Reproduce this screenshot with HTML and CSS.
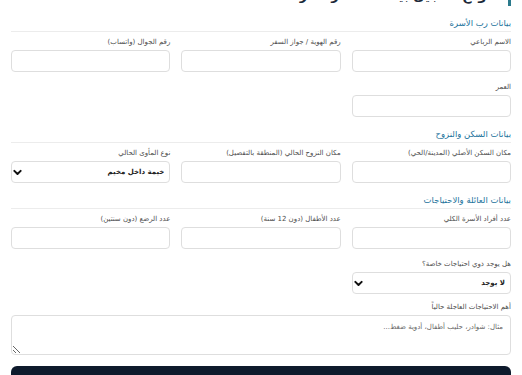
FILE: index.html
```html
<!DOCTYPE html>
<html lang="ar" dir="rtl">
<head>
    <meta charset="UTF-8">
    <meta name="viewport" content="width=device-width, initial-scale=1.0">
    <title>تسجيل بيانات الأسر</title>
    <link rel="stylesheet" href="styles.css">
</head>
<body>
    <div id="form-page">
        <h1 class="form-title">نموذج تسجيل بيانات الأسر النازحة</h1>

        <section class="form-section">
            <h2 class="section-title">بيانات رب الأسرة</h2>
            <div class="fields">
                <div class="field">
                    <label for="full-name">الاسم الرباعي</label>
                    <input type="text" id="full-name">
                </div>
                <div class="field">
                    <label for="id-number">رقم الهوية / جواز السفر</label>
                    <input type="text" id="id-number">
                </div>
                <div class="field">
                    <label for="phone">رقم الجوال (واتساب)</label>
                    <input type="text" id="phone">
                </div>
                <div class="field">
                    <label for="age">العمر</label>
                    <input type="text" id="age">
                </div>
            </div>
        </section>

        <section class="form-section">
            <h2 class="section-title">بيانات السكن والنزوح</h2>
            <div class="fields">
                <div class="field">
                    <label for="origin">مكان السكن الأصلي (المدينة/الحي)</label>
                    <input type="text" id="origin">
                </div>
                <div class="field">
                    <label for="current-place">مكان النزوح الحالي (المنطقة بالتفصيل)</label>
                    <input type="text" id="current-place">
                </div>
                <div class="field">
                    <label for="shelter">نوع المأوى الحالي</label>
                    <div class="select-box">
                        <select id="shelter">
                            <option>خيمة داخل مخيم</option>
                            <option>مدرسة إيواء</option>
                            <option>منزل أقارب</option>
                        </select>
                        <svg class="chevron" viewBox="0 0 10 10" width="9" height="9"><path d="M1.5 3.2 5 6.7 8.5 3.2" fill="none" stroke="#111" stroke-width="2.2" stroke-linecap="round" stroke-linejoin="round"/></svg>
                    </div>
                </div>
            </div>
        </section>

        <section class="form-section">
            <h2 class="section-title">بيانات العائلة والاحتياجات</h2>
            <div class="fields">
                <div class="field">
                    <label for="members">عدد أفراد الأسرة الكلي</label>
                    <input type="text" id="members">
                </div>
                <div class="field">
                    <label for="children">عدد الأطفال (دون 12 سنة)</label>
                    <input type="text" id="children">
                </div>
                <div class="field">
                    <label for="infants">عدد الرضع (دون سنتين)</label>
                    <input type="text" id="infants">
                </div>
                <div class="field">
                    <label for="special">هل يوجد ذوي احتياجات خاصة؟</label>
                    <div class="select-box">
                        <select id="special">
                            <option>لا يوجد</option>
                            <option>نعم</option>
                        </select>
                        <svg class="chevron" viewBox="0 0 10 10" width="9" height="9"><path d="M1.5 3.2 5 6.7 8.5 3.2" fill="none" stroke="#111" stroke-width="2.2" stroke-linecap="round" stroke-linejoin="round"/></svg>
                    </div>
                </div>
            </div>
            <div class="field field-wide">
                <label for="needs">أهم الاحتياجات العاجلة حالياً</label>
                <textarea id="needs" placeholder="مثال: شوادر، حليب أطفال، أدوية ضغط..."></textarea>
            </div>
        </section>

        <button class="submit-btn">حفظ وإرسال بيانات الأسرة</button>
    </div>
</body>
</html>
```

FILE: styles.css
```css
/* Genel */
body {
    margin: 0;
    background: #fff;
    font-family: "DejaVu Sans", sans-serif;
    color: #333;
    overflow: hidden;
}

#form-page {
    padding: 0 11px;
}

.form-title {
    margin: -14px 0 11px;
    padding-right: 8px;
    border-right: 3px solid #2b7a8c;
    font-size: 13px;
    line-height: 20px;
    color: #1d2a3a;
}

.form-section {
    margin-bottom: 11px;
}

.section-title {
    margin: 0 0 6px;
    padding-bottom: 2px;
    border-bottom: 1px solid #ececec;
    font-size: 8.5px;
    line-height: 12px;
    font-weight: normal;
    color: #23739c;
}

.fields {
    display: grid;
    grid-template-columns: repeat(3, 1fr);
    gap: 11px;
}

.field {
    display: flex;
    flex-direction: column;
}

.field label {
    margin-bottom: 3px;
    font-size: 7px;
    line-height: 9px;
    color: #4d4d4d;
}

.field input,
.field select,
.field textarea {
    display: block;
    box-sizing: border-box;
    width: 100%;
    margin: 0;
    border: 1px solid #dedede;
    border-radius: 4px;
    background: #fff;
    font-family: inherit;
}

.field input {
    height: 22px;
}

.field-wide {
    margin-top: 9px;
}

.field textarea {
    height: 40px;
    padding: 7px;
    font-size: 7px;
    line-height: 9px;
    resize: vertical;
}

.field textarea::placeholder {
    color: #666;
}

.select-box {
    position: relative;
}

.field select {
    height: 22px;
    padding: 0 5px 0 18px;
    appearance: none;
    font-size: 7px;
    font-weight: bold;
    color: #222;
}

.chevron {
    position: absolute;
    left: 2px;
    top: 6.5px;
    pointer-events: none;
}

.submit-btn {
    display: block;
    width: 100%;
    height: 32px;
    border: none;
    border-radius: 6px;
    background: #0e1a2c;
    color: #fff;
    font-family: inherit;
    font-size: 10px;
    font-weight: bold;
}
```
